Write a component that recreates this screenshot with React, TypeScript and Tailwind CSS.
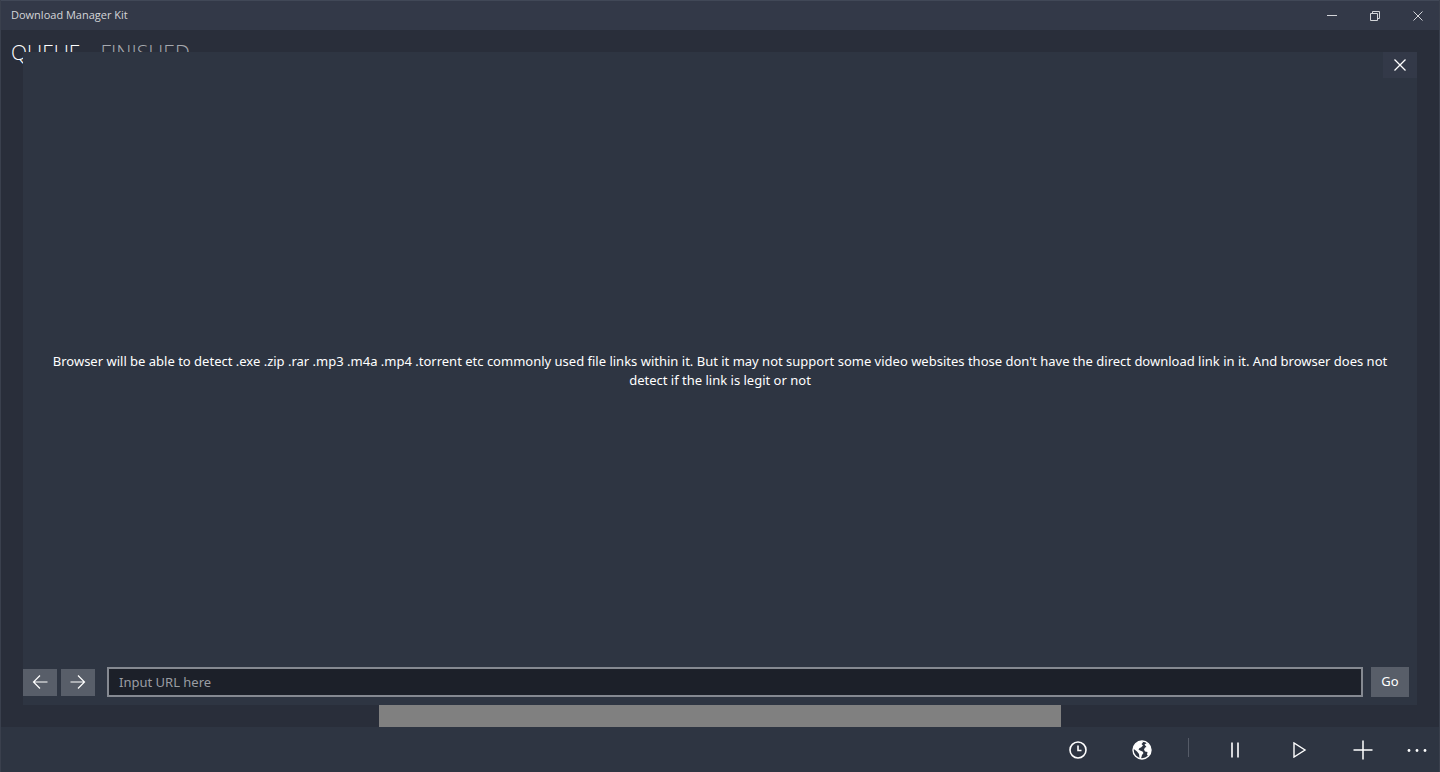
import type { ReactNode } from 'react'

type IconButtonProps = {
  label: string
  className: string
  children: ReactNode
}

function IconButton({ label, className, children }: IconButtonProps) {
  return (
    <button type="button" aria-label={label} className={`flex items-center justify-center ${className}`}>
      {children}
    </button>
  )
}

export default function App() {
  return (
    <div className="relative flex min-h-screen flex-col border-x border-[#3a404d] bg-[#292e3a] font-['Open_Sans',sans-serif] text-white">
      {/* Title bar */}
      <header className="flex h-[30px] items-center justify-between border-t border-[#414857] bg-[#333948] pl-2.5 text-[#d3d5d9]">
        <h1 className="text-[11px]">Download Manager Kit</h1>
        <div className="flex h-full">
          <IconButton label="Minimize" className="w-[43px]">
            <svg className="h-[10px] w-[10px]" viewBox="0 0 10 10" fill="none" stroke="currentColor">
              <path d="M0 4.5h10" />
            </svg>
          </IconButton>
          <IconButton label="Restore" className="w-[43px]">
            <svg className="h-[10px] w-[10px]" viewBox="0 0 10 10" fill="none" stroke="currentColor">
              <path d="M.5 2.5h7v7h-7zM2.5 2.5v-2h7v7h-2" />
            </svg>
          </IconButton>
          <IconButton label="Close window" className="w-[43px]">
            <svg className="h-[10px] w-[10px]" viewBox="0 0 10 10" fill="none" stroke="currentColor">
              <path d="M.5.5l9 9M9.5.5l-9 9" />
            </svg>
          </IconButton>
        </div>
      </header>

      {/* Tabs */}
      <main className="flex flex-1 flex-col justify-between">
        <nav className="flex gap-5 px-2.5 pt-2 text-[21px] font-light leading-7">
          <a href="#queue">QUEUE</a>
          <a href="#finished" className="text-[#a6a9af]">FINISHED</a>
        </nav>
        <div className="mx-auto h-[22px] w-[682px] bg-[#808080]" />
      </main>

      {/* Command bar */}
      <footer className="flex h-[45px] items-center justify-end bg-[#2e3542]">
        <IconButton label="Schedule" className="h-full w-16">
          <svg className="h-[18px] w-[18px]" viewBox="0 0 18 18" fill="none" stroke="currentColor" strokeWidth="1.6">
            <circle cx="9" cy="9" r="8" />
            <path d="M9 4.5V9.500h3.500" />
          </svg>
        </IconButton>
        <IconButton label="Browser" className="h-full w-16">
          <svg className="h-5 w-5" viewBox="0 0 20 20">
            <circle cx="10" cy="10" r="9" fill="none" stroke="currentColor" strokeWidth="1.4" />
            <path
              fill="currentColor"
              d="M1 9 2.500 5 6 2l4-1 1 1.500L9.500 4 11 5.500 9 7.500 7.500 8 6.500 9.500 8 10.500l2.500 1 1 1.500L10 15l-1 3.500-1.500-.5-.5-4L5 11.500 2.500 9.500zM12.500 4.500 15 3l3 3 1 4-1 4-2 2-1-1.500.5-2.500-2.500-.5L12 9.500l1-2 1.500-.5z"
            />
          </svg>
        </IconButton>
        <div className="mx-[14px] mb-1 h-[19px] w-px bg-[#555b67]" />
        <IconButton label="Pause" className="h-full w-16">
          <svg className="h-4 w-4" viewBox="0 0 16 16" fill="none" stroke="currentColor" strokeWidth="1.6">
            <path d="M5 .5v15M11 .5v15" />
          </svg>
        </IconButton>
        <IconButton label="Start" className="h-full w-16">
          <svg className="h-4 w-4" viewBox="0 0 16 16" fill="none" stroke="currentColor" strokeWidth="1.4">
            <path d="M3 1v14l11-7z" />
          </svg>
        </IconButton>
        <IconButton label="Add" className="h-full w-16">
          <svg className="h-5 w-5" viewBox="0 0 20 20" fill="none" stroke="currentColor" strokeWidth="1.5">
            <path d="M.5 10h19M10 .5v19" />
          </svg>
        </IconButton>
        <IconButton label="More" className="h-full w-11">
          <svg className="h-5 w-5" viewBox="0 0 20 20" fill="currentColor">
            <circle cx="2" cy="10.500" r="1.400" />
            <circle cx="10" cy="10.500" r="1.400" />
            <circle cx="18" cy="10.500" r="1.400" />
          </svg>
        </IconButton>
      </footer>

      {/* Browser dialog */}
      <section
        role="dialog"
        aria-label="Browser"
        className="absolute inset-x-[22px] bottom-[67px] top-[52px] flex flex-col bg-[#2e3542] font-['Noto_Sans',sans-serif]"
      >
        <IconButton label="Close browser" className="h-[26px] w-[34px] self-end bg-[#333948]">
          <svg className="h-3 w-3" viewBox="0 0 12 12" fill="none" stroke="currentColor" strokeWidth="1.3">
            <path d="M.5.5l11 11M11.500.5l-11 11" />
          </svg>
        </IconButton>

        <div className="flex flex-1 items-center justify-center px-4 pb-1">
          <p className="text-center text-[13px] leading-[19px]">
            Browser will be able to detect .exe .zip .rar .mp3 .m4a .mp4 .torrent etc commonly used file links
            within it. But it may not support some video websites those don't have the direct download link in
            it. And browser does not detect if the link is legit or not
          </p>
        </div>

        <form className="flex items-center pb-2 pr-2" onSubmit={(e) => e.preventDefault()}>
          <IconButton label="Back" className="h-[27px] w-[34px] bg-[#585e69]">
            <svg className="h-4 w-4" viewBox="0 0 16 16" fill="none" stroke="currentColor" strokeWidth="1.2">
              <path d="M15.500 8H1.500M8 1.500 1.500 8 8 14.500" />
            </svg>
          </IconButton>
          <IconButton label="Forward" className="ml-1 h-[27px] w-[34px] bg-[#585e69]">
            <svg className="h-4 w-4" viewBox="0 0 16 16" fill="none" stroke="currentColor" strokeWidth="1.2">
              <path d="M.5 8h14M8 1.500 14.500 8 8 14.500" />
            </svg>
          </IconButton>
          <input
            type="text"
            aria-label="URL"
            placeholder="Input URL here"
            className="ml-3 mr-2 h-[30px] min-w-0 flex-1 border-2 border-[#858991] bg-[#1c2029] px-2.5 text-[13px] placeholder:text-[#9a9da3]"
          />
          <button type="submit" className="h-[30px] w-[38px] bg-[#585e69] text-[13px]">
            Go
          </button>
        </form>
      </section>
    </div>
  )
}
